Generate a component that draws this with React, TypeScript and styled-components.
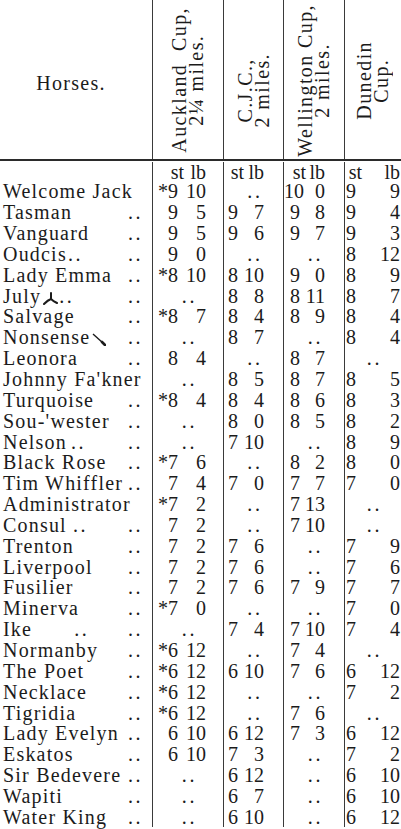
import React from 'react';
import styled, { createGlobalStyle } from 'styled-components';

const GlobalStyle = createGlobalStyle`
  html, body {
    margin: 0;
    padding: 0;
    background: #fff;
  }
  body {
    font-family: "Liberation Serif", "Times New Roman", serif;
    color: #1b1b1b;
  }
`;

const COLS = '152px 71px 60px 61px 57px';

type Cell = null | { star?: boolean; st: string; lb: string };

interface Horse {
  name: string;
  leader?: boolean;
  inline?: number;
  mark?: 'july' | 'nonsense';
  cells: Cell[];
}

const c = (s: string): Cell => {
  const star = s.startsWith('*');
  const [st, lb] = s.replace('*', '').split(' ');
  return { star, st, lb };
};

const horses: Horse[] = [
  { name: 'Welcome Jack', cells: [c('*9 10'), null, c('10 0'), c('9 9')] },
  { name: 'Tasman', leader: true, cells: [c('9 5'), c('9 7'), c('9 8'), c('9 4')] },
  { name: 'Vanguard', leader: true, cells: [c('9 5'), c('9 6'), c('9 7'), c('9 3')] },
  { name: 'Oudcis', inline: 1, leader: true, cells: [c('9 0'), null, null, c('8 12')] },
  { name: 'Lady Emma', leader: true, cells: [c('*8 10'), c('8 10'), c('9 0'), c('8 9')] },
  { name: 'July', mark: 'july', inline: 0, leader: true, cells: [null, c('8 8'), c('8 11'), c('8 7')] },
  { name: 'Salvage', leader: true, cells: [c('*8 7'), c('8 4'), c('8 9'), c('8 4')] },
  { name: 'Nonsense', mark: 'nonsense', leader: true, cells: [null, c('8 7'), null, c('8 4')] },
  { name: 'Leonora', leader: true, cells: [c('8 4'), null, c('8 7'), null] },
  { name: "Johnny Fa'kner", cells: [null, c('8 5'), c('8 7'), c('8 5')] },
  { name: 'Turquoise', leader: true, cells: [c('*8 4'), c('8 4'), c('8 6'), c('8 3')] },
  { name: "Sou-'wester", leader: true, cells: [null, c('8 0'), c('8 5'), c('8 2')] },
  { name: 'Nelson', inline: 4, leader: true, cells: [null, c('7 10'), null, c('8 9')] },
  { name: 'Black Rose', leader: true, cells: [c('*7 6'), null, c('8 2'), c('8 0')] },
  { name: 'Tim Whiffler', leader: true, cells: [c('7 4'), c('7 0'), c('7 7'), c('7 0')] },
  { name: 'Administrator', cells: [c('*7 2'), null, c('7 13'), null] },
  { name: 'Consul', inline: 6, leader: true, cells: [c('7 2'), null, c('7 10'), null] },
  { name: 'Trenton', leader: true, cells: [c('7 2'), c('7 6'), null, c('7 9')] },
  { name: 'Liverpool', leader: true, cells: [c('7 2'), c('7 6'), null, c('7 6')] },
  { name: 'Fusilier', leader: true, cells: [c('7 2'), c('7 6'), c('7 9'), c('7 7')] },
  { name: 'Minerva', leader: true, cells: [c('*7 0'), null, null, c('7 0')] },
  { name: 'Ike', inline: 42, leader: true, cells: [null, c('7 4'), c('7 10'), c('7 4')] },
  { name: 'Normanby', leader: true, cells: [c('*6 12'), null, c('7 4'), null] },
  { name: 'The Poet', leader: true, cells: [c('*6 12'), c('6 10'), c('7 6'), c('6 12')] },
  { name: 'Necklace', leader: true, cells: [c('*6 12'), null, null, c('7 2')] },
  { name: 'Tigridia', leader: true, cells: [c('*6 12'), null, c('7 6'), null] },
  { name: 'Lady Evelyn', leader: true, cells: [c('6 10'), c('6 12'), c('7 3'), c('6 12')] },
  { name: 'Eskatos', leader: true, cells: [c('6 10'), c('7 3'), null, c('7 2')] },
  { name: 'Sir Bedevere', leader: true, cells: [null, c('6 12'), null, c('6 10')] },
  { name: 'Wapiti', leader: true, cells: [null, c('6 7'), null, c('6 10')] },
  { name: 'Water King', leader: true, cells: [null, c('6 10'), null, c('6 12')] },
];

// right edges of the st and lb figures inside each race column
const races = [
  { lines: ['Auckland\u00a0 Cup,', '2\u00bc miles.'], shift: 0, stEnd: 25, lbEnd: 53 },
  { lines: ['C.J.C.,', '2 miles.'], shift: 22, stEnd: 14, lbEnd: 40 },
  { lines: ['Wellington Cup,', '2 miles.'], shift: 2, stEnd: 16, lbEnd: 41 },
  { lines: ['Dunedin', 'Cup.'], shift: 2, stEnd: 11, lbEnd: 55 },
];

const Page = styled.div`
  width: 401px;
  height: 829px;
  overflow: hidden;
  background: #fff;
`;

const HeaderRow = styled.div`
  display: grid;
  grid-template-columns: ${COLS};
  height: 159px;
  border-bottom: 2px solid #2b2b2b;
`;

const HorsesHead = styled.div`
  display: flex;
  align-items: center;
  justify-content: center;
  padding: 8px 10px 0 0;
  font-size: 20px;
  letter-spacing: 1.3px;
`;

const RaceHead = styled.div<{ $shift: number }>`
  display: flex;
  align-items: center;
  justify-content: center;
  border-left: 1px solid #3a3a3a;
  padding-top: ${(p) => p.$shift}px;
`;

const Rotated = styled.div`
  writing-mode: vertical-rl;
  text-orientation: sideways;
  transform: rotate(180deg);
  text-align: center;
  font-size: 20px;
  letter-spacing: 1.4px;
  line-height: 17px;
  white-space: nowrap;
`;

const HeadLine = styled.span`
  display: block;
`;

const Body = styled.div`
  margin-top: 1px;
`;

const Row = styled.div<{ $h: number }>`
  display: grid;
  grid-template-columns: ${COLS};
  height: ${(p) => p.$h}px;
  font-size: 20px;
  line-height: 18px;
`;

const NameCell = styled.div`
  display: flex;
  align-items: center;
  padding-left: 3px;
  letter-spacing: 1.2px;
  white-space: nowrap;
`;

const Name = styled.span`
  flex: 1;
  display: flex;
  align-items: center;
`;

const Dots = styled.span<{ $gap?: number }>`
  letter-spacing: 2.6px;
  margin-left: ${(p) => p.$gap ?? 0}px;
`;

const Leader = styled.span`
  width: 24px;
  flex: none;
  letter-spacing: 2.6px;
`;

const DataCell = styled.div<{ $st: number; $lb: number }>`
  display: grid;
  grid-template-columns: ${(p) => p.$st}px ${(p) => p.$lb - p.$st}px;
  align-items: center;
  border-left: 1px solid #3a3a3a;
`;

const Fig = styled.span`
  text-align: right;
  white-space: nowrap;
`;

const Empty = styled.div`
  display: flex;
  align-items: center;
  justify-content: center;
  padding-left: 3px;
  border-left: 1px solid #3a3a3a;
  letter-spacing: 2.8px;
`;

const Mark = styled.svg`
  flex: none;
  margin: 4px 1px 0 2px;
`;

const JulyMark = () => (
  <Mark width="15" height="14" viewBox="0 0 15 14">
    <path d="M8 2 L8 8 M8 8 C5 9 3 11 1 13 M8 8 C10 10 12 11 14 12" stroke="#1b1b1b" strokeWidth="2" fill="none" strokeLinecap="round" />
  </Mark>
);

const NonsenseMark = () => (
  <Mark width="14" height="14" viewBox="0 0 14 14">
    <path d="M1 2 L11 11" stroke="#1b1b1b" strokeWidth="1.4" fill="none" />
    <path d="M10 10 L13 13" stroke="#1b1b1b" strokeWidth="2.6" strokeLinecap="round" />
  </Mark>
);

const App: React.FC = () => (
  <Page>
    <GlobalStyle />
    <HeaderRow>
      <HorsesHead>Horses.</HorsesHead>
      {races.map((r) => (
        <RaceHead key={r.lines[0]} $shift={r.shift}>
          <Rotated>
            {r.lines.map((l) => (
              <HeadLine key={l}>{l}</HeadLine>
            ))}
          </Rotated>
        </RaceHead>
      ))}
    </HeaderRow>
    <Body>
      <Row $h={19}>
        <NameCell />
        {races.map((r) => (
          <DataCell key={r.lines[0]} $st={r.stEnd + 6} $lb={r.lbEnd}>
            <Fig>st</Fig>
            <Fig>lb</Fig>
          </DataCell>
        ))}
      </Row>
      {horses.map((h) => (
        <Row key={h.name} $h={20.85}>
          <NameCell>
            <Name>
              {h.name}
              {h.mark === 'july' && <JulyMark />}
              {h.mark === 'nonsense' && <NonsenseMark />}
              {h.inline !== undefined && <Dots $gap={h.inline}>..</Dots>}
            </Name>
            {h.leader && <Leader>..</Leader>}
          </NameCell>
          {h.cells.map((cell, i) =>
            cell ? (
              <DataCell key={i} $st={races[i].stEnd} $lb={races[i].lbEnd}>
                <Fig>
                  {cell.star ? '*' : ''}
                  {cell.st}
                </Fig>
                <Fig>{cell.lb}</Fig>
              </DataCell>
            ) : (
              <Empty key={i}>..</Empty>
            )
          )}
        </Row>
      ))}
    </Body>
  </Page>
);

export default App;
